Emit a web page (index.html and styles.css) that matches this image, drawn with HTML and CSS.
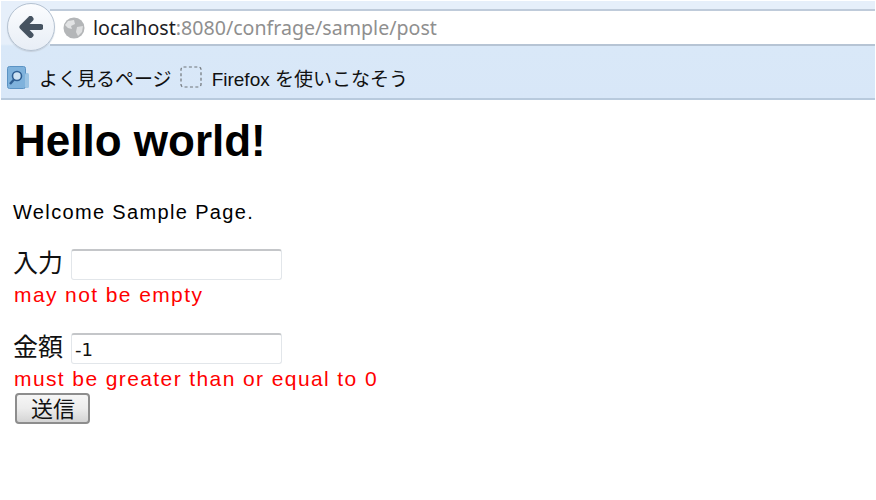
FILE: index.html
```html
<!DOCTYPE html>
<html lang="ja">
<head>
<meta charset="utf-8">
<title>Hello world!</title>
<link rel="stylesheet" href="styles.css">
</head>
<body>
<header class="chrome">
  <div class="navbar">
    <div class="urlbar">
      <svg class="globe" viewBox="0 0 22 22" width="22" height="22">
        <circle cx="11" cy="11" r="10.5" fill="#b4b6b8"/>
        <path d="M5 4 L11 3 L12 7 L8 9 L9 12 L5 11 L2 8 Z" fill="#e2e3e4"/>
        <path d="M14 10 L20 9 L19 15 L15 19 L13 15 Z" fill="#dedfe0"/>
      </svg>
      <span class="host">localhost</span><span class="path">:8080/confrage/sample/post</span>
    </div>
    <button class="back" type="button" aria-label="戻る">
      <svg viewBox="0 0 24 22" width="24" height="22">
        <path d="M11.5 3 L3.5 11 L11.5 19 M4 11 L21.5 11" fill="none" stroke="#465361" stroke-width="6" stroke-linejoin="round" stroke-linecap="round"/>
      </svg>
    </button>
  </div>
  <nav class="bookmarks">
    <svg class="bm-icon" viewBox="0 0 22 23" width="22" height="23">
      <rect x="0.5" y="0.5" width="18" height="22" rx="2" fill="#7fb2dc" stroke="#5b93c4"/>
      <rect x="18" y="7" width="4" height="15" rx="1.5" fill="#9cc4e4"/>
      <circle cx="10" cy="10" r="4.5" fill="#cfe3f3" stroke="#2f5f93" stroke-width="1.6"/>
      <path d="M7 13.5 L3 18" stroke="#2f5f93" stroke-width="2.4"/>
    </svg>
    <span class="bm-label">よく見るページ</span>
    <svg class="bm-folder" viewBox="0 0 22 22" width="22" height="22">
      <rect x="1" y="1" width="20" height="20" rx="2.5" fill="none" stroke="#6f7478" stroke-width="1.2" stroke-dasharray="3 2.4"/>
    </svg>
    <span class="bm-label">Firefox を使いこなそう</span>
  </nav>
</header>
<main class="page">
  <h1 class="title">Hello world!</h1>
  <p class="welcome">Welcome Sample Page.</p>
  <form class="form">
    <div class="field">
      <div class="row"><label class="label">入力</label><input class="input" type="text"></div>
      <div class="error">may not be empty</div>
    </div>
    <div class="field last">
      <div class="row"><label class="label">金額</label><input class="input" type="text" value="-1"></div>
      <div class="error">must be greater than or equal to 0</div>
    </div>
    <button class="submit" type="button">送信</button>
  </form>
</main>
</body>
</html>
```
FILE: styles.css
```css
html, body {
  margin: 0;
  padding: 0;
  background: #fff;
}
body {
  width: 876px;
  height: 500px;
  overflow: hidden;
  font-family: "Liberation Sans", "Noto Sans CJK JP", sans-serif;
  color: #000;
}
.chrome {
  height: 99px;
  margin: 1px 1px 0;
  box-sizing: border-box;
  border-bottom: 2px solid #b8cadd;
  background: linear-gradient(#e6effa 0, #e6effa 43px, #d9e8f8 45px, #d8e7f8 100%);
}
.navbar {
  position: relative;
  height: 45px;
  padding-top: 8px;
  box-sizing: border-box;
}
.urlbar {
  height: 37px;
  box-sizing: border-box;
  margin-left: 49px;
  padding-left: 13px;
  display: flex;
  align-items: center;
  background: #fff;
  border-top: 2px solid #bfcbda;
  border-bottom: 2px solid #b6c4d4;
  font-family: "Noto Sans", sans-serif;
  font-size: 19.6px;
  color: #000;
}
.globe {
  margin-right: 8px;
  flex: none;
}
.host { color: #1c1c24; }
.path { color: #8f8f8f; }
.back {
  position: absolute;
  left: 6px;
  top: 2px;
  width: 48px;
  height: 48px;
  padding: 0;
  border-radius: 50%;
  border: 1px solid #b5c2d1;
  background: linear-gradient(#fbfcfe, #e8eef6);
  box-shadow: 0 1px 1px #c5d0dc;
  display: flex;
  align-items: center;
  justify-content: center;
}
.bookmarks {
  height: 52px;
  padding-left: 6px;
  padding-top: 10px;
  box-sizing: border-box;
  display: flex;
  align-items: center;
  font-size: 19px;
  color: #111;
}
.bm-icon { margin-right: 10px; flex: none; }
.bm-folder { margin: 0 10px 0 8px; flex: none; }
.bm-label { white-space: nowrap; }
.page {
  padding: 0 13px;
}
.title {
  margin: 0;
  padding: 16px 0 0 1px;
  font-size: 44px;
  line-height: 50px;
  font-weight: 700;
}
.welcome {
  margin: 0;
  padding-top: 34px;
  font-size: 20px;
  line-height: 24px;
  letter-spacing: 1.35px;
}
.form { margin: 0; }
.field { margin-top: 25px; }
.field.last { margin-top: 25px; }
.row {
  display: flex;
  align-items: center;
  height: 31px;
}
.label {
  font-size: 25px;
  line-height: 31px;
  padding-bottom: 3px;
  width: 58px;
  flex: none;
  color: #111;
}
.input {
  width: 211px;
  height: 31px;
  box-sizing: border-box;
  margin: 0;
  padding: 0 3px;
  border: 1px solid #e2e6ea;
  border-top: 2px solid #c4c6c9;
  border-radius: 3px;
  font-family: "DejaVu Sans", sans-serif;
  font-size: 18px;
  color: #111;
  background: #fff;
}
.error {
  margin-top: 2px;
  padding-left: 1px;
  font-size: 21px;
  line-height: 26px;
  letter-spacing: 1.4px;
  color: #f00;
}
.submit {
  display: block;
  width: 75px;
  height: 31px;
  margin: 1px 0 0 2px;
  padding: 0 0 3px 1px;
  border: 2px solid #8d8d8d;
  border-radius: 4px;
  background: linear-gradient(#f6f6f6 0, #ececec 50%, #d4d4d4 100%);
  font-family: "Noto Sans CJK JP", sans-serif;
  font-size: 22px;
  line-height: 24px;
  color: #111;
}
```
